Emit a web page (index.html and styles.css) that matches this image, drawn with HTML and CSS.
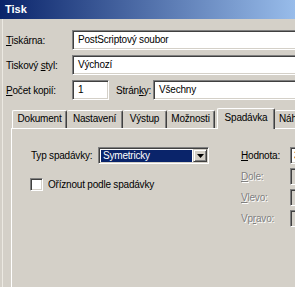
FILE: index.html
```html
<!DOCTYPE html>
<html lang="cs">
<head>
    <meta charset="UTF-8">
    <meta name="viewport" content="width=device-width, initial-scale=1.0">
    <title>Tisk</title>
    <link rel="stylesheet" href="styles.css">
</head>
<body>
    <div class="window">
        <div class="titlebar">Tisk</div>
        <div class="content">
            <!-- Printer fields -->
            <div class="fields">
                <label class="field-label"><u>T</u>iskárna:</label>
                <div class="edit">PostScriptový soubor</div>

                <label class="field-label">Tiskový <u>s</u>tyl:</label>
                <div class="edit">Výchozí</div>

                <label class="field-label"><u>P</u>očet kopií:</label>
                <div class="copies-row">
                    <div class="edit edit-short">1</div>
                    <label class="field-label pages-label">Strán<u>k</u>y:</label>
                    <div class="edit edit-grow">Všechny</div>
                </div>
            </div>

            <!-- Tabs -->
            <div class="tabs">
                <div class="tab tab-doc">Dokument</div>
                <div class="tab tab-setup">Nastavení</div>
                <div class="tab tab-out">Výstup</div>
                <div class="tab tab-opt">Možnosti</div>
                <div class="tab tab-bleed active">Spadávka</div>
                <div class="tab tab-prev">Náhled</div>
            </div>

            <div class="panel">
                <div class="panel-left">
                    <div class="combo-row">
                        <label class="field-label combo-label">Typ spadávky:</label>
                        <div class="combo">
                            <div class="combo-value">Symetricky</div>
                            <div class="combo-button">
                                <svg width="7" height="4" viewBox="0 0 7 4"><path d="M0 0h7L3.5 4z" fill="#000"/></svg>
                            </div>
                        </div>
                    </div>
                    <div class="check-row">
                        <div class="checkbox"></div>
                        <label class="field-label">Oříznout podle spadávky</label>
                    </div>
                </div>
                <div class="panel-right">
                    <label class="field-label"><u>H</u>odnota:</label>
                    <div class="edit edit-small">3</div>
                    <label class="field-label disabled"><u>D</u>ole:</label>
                    <div class="edit edit-small edit-disabled"></div>
                    <label class="field-label disabled"><u>V</u>levo:</label>
                    <div class="edit edit-small edit-disabled"></div>
                    <label class="field-label disabled">Vp<u>r</u>avo:</label>
                    <div class="edit edit-small edit-disabled"></div>
                </div>
            </div>
        </div>
    </div>
</body>
</html>
```

FILE: styles.css
```css
body {
    margin: 0;
    font-family: "Liberation Sans", Arial, sans-serif;
    font-size: 10px;
    letter-spacing: -0.2px;
    color: #000;
}
.window {
    width: 295px;
    height: 287px;
    overflow: hidden;
    background-color: #d4d0c8;
}
.titlebar {
    height: 19px;
    line-height: 19px;
    padding-left: 5px;
    color: #fff;
    font-size: 11px;
    letter-spacing: 0;
    font-weight: bold;
    background: linear-gradient(to right, #0a246a, #98bcea);
}
.content {
    width: 420px;
    padding-top: 11px;
    border-left: 1px solid #ece9e2;
    margin-left: 2px;
}
.fields {
    display: grid;
    grid-template-columns: 66px 1fr;
    row-gap: 5px;
    align-items: center;
    padding-left: 3px;
}
.field-label {
    white-space: nowrap;
}
.edit {
    box-sizing: border-box;
    height: 20px;
    line-height: 16px;
    padding-left: 5px;
    padding-top: 1px;
    background-color: #fff;
    border: 1px solid;
    border-color: #808080 #fff #fff #808080;
    box-shadow: inset 1px 1px #404040, inset -1px -1px #d4d0c8;
}
.copies-row {
    display: flex;
    align-items: center;
}
.edit-short {
    width: 37px;
}
.pages-label {
    margin-left: 7px;
    width: 37px;
}
.edit-grow {
    flex: 1;
}

/* Tabs */
.tabs {
    display: flex;
    align-items: flex-end;
    height: 21px;
    margin-top: 7px;
    padding-left: 9px;
    position: relative;
    z-index: 1;
}
.tab {
    box-sizing: border-box;
    height: 18px;
    line-height: 16px;
    text-align: center;
    border-top: 1px solid #fff;
    border-left: 1px solid #fff;
    border-right: 1px solid #404040;
    border-radius: 2px 2px 0 0;
    box-shadow: inset -1px 0 #808080;
    white-space: nowrap;
}
.tab-doc { width: 55px; }
.tab-setup { width: 56px; border-left: none; }
.tab-out { width: 44px; border-left: none; }
.tab-opt { width: 48px; border-left: none; }
.tab-bleed { width: 58px; }
.tab-prev { width: 50px; border-left: none; text-align: left; padding-left: 4px; }
.tab.active {
    height: 21px;
    line-height: 18px;
    margin-left: 2px;
    margin-bottom: -1px;
    background-color: #d4d0c8;
}

/* Panel */
.panel {
    display: flex;
    height: 180px;
    margin-left: 8px;
    padding-top: 18px;
    padding-left: 19px;
    border-top: 1px solid #fff;
    border-left: 1px solid #fff;
}
.panel-left {
    width: 210px;
}
.combo-row {
    display: flex;
    align-items: center;
}
.combo-label {
    width: 67px;
}
.combo {
    box-sizing: border-box;
    display: flex;
    width: 111px;
    height: 17px;
    padding: 1px;
    background-color: #fff;
    border: 1px solid;
    border-color: #808080 #fff #fff #808080;
    box-shadow: inset 1px 1px #404040, inset -1px -1px #d4d0c8;
}
.combo-value {
    flex: 1;
    margin: 1px 0 0 1px;
    background-color: #0a246a;
    color: #fff;
    line-height: 12px;
    padding-left: 2px;
}
.combo-button {
    box-sizing: border-box;
    width: 14px;
    margin-left: 1px;
    display: flex;
    align-items: center;
    justify-content: center;
    background-color: #d4d0c8;
    border: 1px solid;
    border-color: #d4d0c8 #404040 #404040 #d4d0c8;
    box-shadow: inset 1px 1px #fff, inset -1px -1px #808080;
}
.check-row {
    display: flex;
    align-items: center;
    gap: 5px;
    margin-top: 14px;
    margin-left: -1px;
}
.checkbox {
    box-sizing: border-box;
    width: 13px;
    height: 13px;
    background-color: #fff;
    border: 1px solid;
    border-color: #808080 #fff #fff #808080;
    box-shadow: inset 1px 1px #404040, inset -1px -1px #d4d0c8;
}
.panel-right {
    display: grid;
    grid-template-columns: 49px 60px;
    grid-auto-rows: 17px;
    row-gap: 4px;
    align-items: center;
}
.edit-small {
    height: 17px;
    line-height: 13px;
    padding-left: 3px;
}
.edit-disabled {
    background-color: #d4d0c8;
}
.disabled {
    color: #808080;
    text-shadow: 1px 1px #fff;
}
```
